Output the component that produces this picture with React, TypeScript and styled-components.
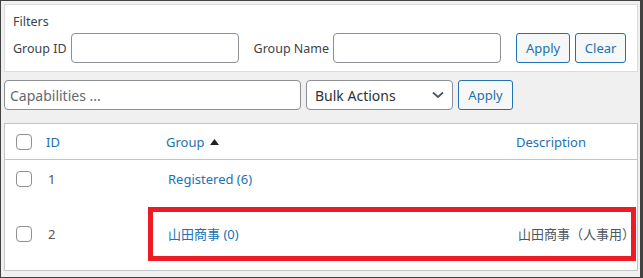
import React from 'react'

import { createGlobalStyle, styled } from 'styled-components'

const GlobalStyle = createGlobalStyle`
  html, body {
    margin: 0;
    padding: 0;
    background: #ffffff;
  }
  body {
    font-family: "Noto Sans", "Noto Sans CJK JP", sans-serif;
    font-size: 13px;
    color: #3c434a;
  }
`

const Frame = styled.div`
  position: relative;
  box-sizing: border-box;
  width: 643px;
  height: 278px;
  overflow: hidden;
  background: #f0f0f1;
  border-style: solid;
  border-color: #424242;
  border-width: 1px 3px 1px 1px;
  padding: 3px 0 0 3px;
`

const FilterBox = styled.div`
  box-sizing: border-box;
  width: 634px;
  height: 68px;
  background: #ffffff;
  border: 1px solid #dcdcde;
  padding: 6px 8px 0 8px;
`

const FilterTitle = styled.div`
  line-height: 22px;
  height: 22px;
  font-size: 12.5px;
`

const FilterRow = styled.div`
  display: flex;
  align-items: center;
  height: 30px;
`

const Field = styled.label`
  display: flex;
  align-items: center;
  flex-shrink: 0;
  gap: 4px;
  margin-right: 15px;
  white-space: nowrap;
  font-size: 12.5px;
`

const TextInput = styled.input<{ $width: number }>`
  box-sizing: border-box;
  flex-shrink: 0;
  width: ${p => p.$width}px;
  height: 30px;
  margin: 0;
  padding: 0 5px;
  border: 1px solid #8c8f94;
  border-radius: 4px;
  background: #ffffff;
  font: inherit;
  font-size: 14px;
  color: #2c3338;

  &::placeholder {
    color: #646970;
  }
`

const Button = styled.button<{ $width: number }>`
  box-sizing: border-box;
  flex-shrink: 0;
  width: ${p => p.$width}px;
  height: 30px;
  margin: 0;
  padding: 0;
  border: 1px solid #2271b1;
  border-radius: 3px;
  background: #f6f7f7;
  color: #2271b1;
  font: inherit;
  font-size: 13px;
`

const ButtonGroup = styled.div`
  display: flex;
  gap: 5px;
`

const Toolbar = styled.div`
  display: flex;
  align-items: center;
  gap: 5px;
  margin-top: 8px;
  height: 30px;
`

const SelectBox = styled.div`
  box-sizing: border-box;
  width: 147px;
  height: 30px;
  display: flex;
  align-items: center;
  justify-content: space-between;
  padding: 0 8px 0 8px;
  border: 1px solid #8c8f94;
  border-radius: 4px;
  background: #ffffff;
  font-size: 14px;
  color: #2c3338;
`

const Table = styled.div`
  box-sizing: border-box;
  width: 634px;
  margin-top: 13px;
  background: #ffffff;
  border: 1px solid #c3c4c7;
`

const Row = styled.div<{ $head?: boolean }>`
  display: grid;
  grid-template-columns: 33px 120px 350px 1fr;
  height: ${p => (p.$head ? '35px' : '55px')};
  border-bottom: ${p => (p.$head ? '1px solid #c3c4c7' : 'none')};
  align-items: ${p => (p.$head ? 'center' : 'start')};
`

const CheckCell = styled.div<{ $head?: boolean }>`
  padding: ${p => (p.$head ? '0' : '11px')} 0 0 11px;
  display: flex;
`

const Checkbox = styled.span`
  box-sizing: border-box;
  display: block;
  width: 16px;
  height: 16px;
  border: 1px solid #8c8f94;
  border-radius: 4px;
  background: #ffffff;
`

const HeadCell = styled.div`
  display: flex;
  align-items: center;
  gap: 6px;
  padding-left: 8px;
  color: #2271b1;
`

const Cell = styled.div<{ $link?: boolean }>`
  padding: 9px 0 0 10px;
  line-height: 20px;
  color: ${p => (p.$link ? '#2271b1' : '#50575e')};
  white-space: nowrap;
`

const Highlight = styled.div`
  position: absolute;
  left: 147px;
  top: 206px;
  width: 488px;
  height: 54px;
  box-sizing: border-box;
  border: 5px solid #ed1c24;
  pointer-events: none;
`

function SortUp() {
  return (
    <svg width="9" height="6" viewBox="0 0 9 6">
      <path d="M0 6 L4.5 0 L9 6 Z" fill="#1d2327" />
    </svg>
  )
}

function Chevron() {
  return (
    <svg width="12" height="8" viewBox="0 0 12 8">
      <path d="M1 1.5 L6 6 L11 1.5" fill="none" stroke="#50575e" strokeWidth="1.8" />
    </svg>
  )
}

const groups = [
  { id: 1, name: 'Registered (6)', description: '' },
  { id: 2, name: '山田商事 (0)', description: '山田商事（人事用）' },
]

export default function App() {
  return (
    <>
      <GlobalStyle />
      <Frame>
        <FilterBox>
          <FilterTitle>Filters</FilterTitle>
          <FilterRow>
            <Field>
              Group ID
              <TextInput $width={168} />
            </Field>
            <Field>
              Group Name
              <TextInput $width={168} />
            </Field>
            <ButtonGroup>
              <Button $width={54}>Apply</Button>
              <Button $width={51}>Clear</Button>
            </ButtonGroup>
          </FilterRow>
        </FilterBox>

        <Toolbar>
          <TextInput $width={297} placeholder="Capabilities ..." />
          <SelectBox>
            Bulk Actions
            <Chevron />
          </SelectBox>
          <Button $width={55}>Apply</Button>
        </Toolbar>

        <Table>
          <Row $head>
            <CheckCell $head>
              <Checkbox />
            </CheckCell>
            <HeadCell>ID</HeadCell>
            <HeadCell>
              Group <SortUp />
            </HeadCell>
            <HeadCell>Description</HeadCell>
          </Row>
          {groups.map(group => (
            <Row key={group.id}>
              <CheckCell>
                <Checkbox />
              </CheckCell>
              <Cell>{group.id}</Cell>
              <Cell $link>{group.name}</Cell>
              <Cell>{group.description}</Cell>
            </Row>
          ))}
        </Table>

        <Highlight />
      </Frame>
    </>
  )
}
